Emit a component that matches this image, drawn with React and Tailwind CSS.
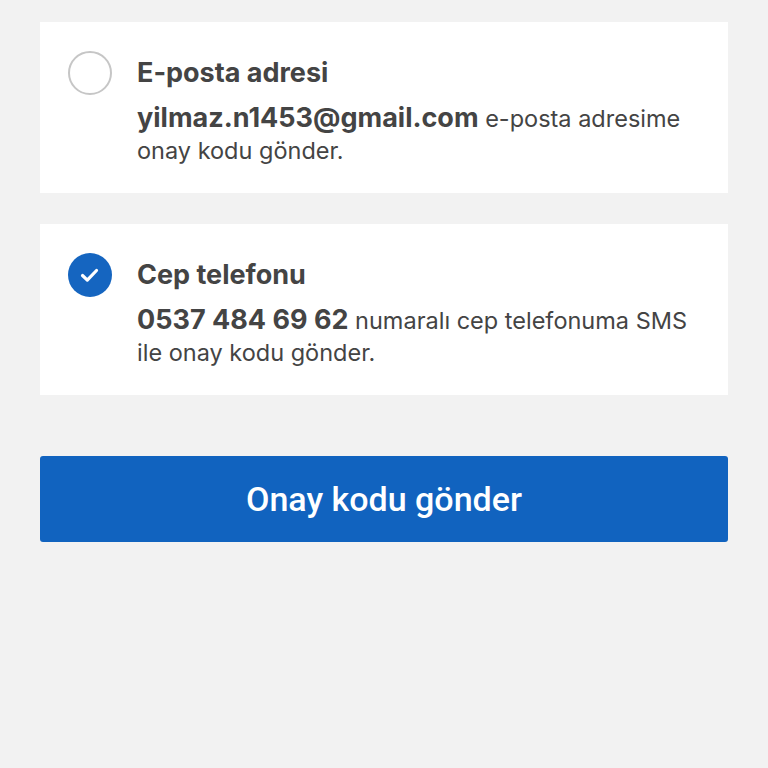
import { useState } from "react";

function Radio({ checked }) {
  if (checked) {
    return (
      <span className="block h-[44px] w-[44px] shrink-0 rounded-full bg-[#1565c0]">
        <svg width="44" height="44" viewBox="0 0 44 44" fill="none">
          <path d="M14.5 22.5l4.8 4.6L28.5 17.5" stroke="#fff" strokeWidth="3.2" strokeLinecap="round" strokeLinejoin="round" />
        </svg>
      </span>
    );
  }
  return <span className="block h-[44px] w-[44px] shrink-0 rounded-full border-2 border-[#c6c6c6] bg-white" />;
}

function Option({ checked, title, bold, rest, tail, onClick }) {
  return (
    <div onClick={onClick} className="flex h-[171px] gap-[25px] bg-white pl-[28px] pr-6 pt-[29px] cursor-pointer">
      <Radio checked={checked} />
      <div className="pt-px text-[#444]">
        <div className="text-[27px] font-bold leading-[42px]">{title}</div>
        <div className="mt-[8px] text-[23.5px] leading-[32px]">
          <span className="text-[27px] font-bold">{bold}</span> {rest}
          <br />
          {tail}
        </div>
      </div>
    </div>
  );
}

export default function App() {
  const [sel, setSel] = useState("phone");
  return (
    <div className="min-h-screen bg-[#f2f2f2] px-10 pt-[22px]" style={{ fontFamily: "Inter, 'Noto Sans', sans-serif" }}>
      <div className="flex flex-col gap-[31px]">
        <Option
          checked={sel === "mail"}
          onClick={() => setSel("mail")}
          title="E-posta adresi"
          bold="yilmaz.n1453@gmail.com"
          rest="e-posta adresime"
          tail="onay kodu gönder."
        />
        <Option
          checked={sel === "phone"}
          onClick={() => setSel("phone")}
          title="Cep telefonu"
          bold="0537 484 69 62"
          rest="numaralı cep telefonuma SMS"
          tail="ile onay kodu gönder."
        />
      </div>
      <button className="mt-[61px] flex h-[86px] w-full items-center justify-center rounded-[3px] bg-[#1163bf] text-[34px] font-medium text-white" style={{ fontFamily: "Roboto, sans-serif" }}>
        Onay kodu gönder
      </button>
    </div>
  );
}
